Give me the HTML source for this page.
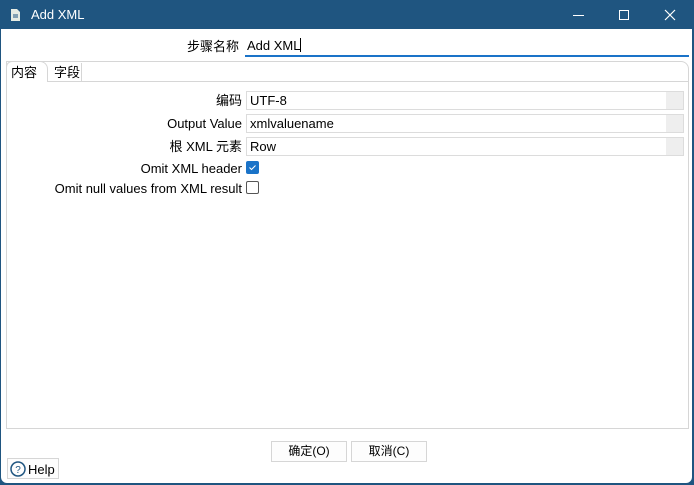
<!DOCTYPE html>
<html><head><meta charset="utf-8"><style>
*{box-sizing:border-box;margin:0;padding:0}
body{width:694px;height:485px;overflow:hidden;background:#1f5580;font-family:"Liberation Sans","Noto Sans CJK SC",sans-serif;font-size:13px;line-height:17px;color:#000;position:relative}
.win{position:absolute;left:1px;top:29px;width:691px;height:454px;background:#fff;border-radius:0 0 6px 6px}
.title{position:absolute;left:31px;top:6px;color:#fff;font-size:13px}
.a{position:absolute}
.lbl{position:absolute;text-align:right;white-space:nowrap;height:17px;line-height:17px}
.inp{position:absolute;left:245px;width:438px;height:19px;border:1px solid #dcdcdc;background:#fff;padding:0 3px;line-height:17px}
.inp i{position:absolute;right:0;top:0;width:17px;height:17px;background:#eeeeee}
.btn{position:absolute;height:21px;border:1px solid #d6d6d6;background:#fdfdfd;text-align:center;line-height:19px;font-size:12px}
</style></head><body>
<svg class="a" style="left:11px;top:9px" width="9" height="12"><path d="M0 0h6l3 3v9H0z" fill="#e6ece3"/><path d="M2 6h5M2 8h5" stroke="#1f5580"/></svg>
<div class="title">Add XML</div>
<div class="a" style="left:573px;top:15px;width:11px;height:1px;background:#fff"></div>
<div class="a" style="left:619px;top:10px;width:10px;height:10px;border:1px solid #fff"></div>
<svg class="a" style="left:664px;top:9px" width="12" height="12"><path d="M1 1L11 11M11 1L1 11" stroke="#fff" stroke-width="1.2"/></svg>
<div class="win">
 <div class="lbl" style="right:453px;top:9px">步骤名称</div>
 <div class="a" style="left:244px;top:8px;width:444px;height:20px;border-bottom:2px solid #1a73c8;padding-left:2px;line-height:17px">Add XML<span style="display:inline-block;width:1px;height:14px;background:#000;vertical-align:-2px"></span></div>
 <div class="a" style="left:5px;top:32px;width:683px;height:368px;border:1px solid #d6d6d6;border-radius:0 8px 0 0"></div>
 <div class="a" style="left:5px;top:32px;width:42px;height:21px;border:1px solid #d6d6d6;border-bottom:none;border-radius:6px 8px 0 0;background:#fff;padding:2px 0 0 4px">内容</div>
 <div class="a" style="left:47px;top:34px;width:34px;height:19px;border-right:1px solid #d6d6d6;padding:1px 0 0 6px">字段</div>
 <div class="a" style="left:47px;top:52px;width:641px;height:1px;background:#d6d6d6"></div>
 <div class="lbl" style="right:450px;top:63px">编码</div>
 <div class="inp" style="top:62px">UTF-8<i></i></div>
 <div class="lbl" style="right:450px;top:86px">Output Value</div>
 <div class="inp" style="top:85px">xmlvaluename<i></i></div>
 <div class="lbl" style="right:450px;top:109px">根 XML 元素</div>
 <div class="inp" style="top:108px">Row<i></i></div>
 <div class="lbl" style="right:450px;top:131px">Omit XML header</div>
 <div class="a" style="left:245px;top:132px;width:13px;height:13px;background:#1a73c8;border-radius:2px"><svg width="13" height="13" style="display:block"><path d="M3.5 6.5l2 2 4-4" stroke="#fff" fill="none"/></svg></div>
 <div class="lbl" style="right:450px;top:151px">Omit null values from XML result</div>
 <div class="a" style="left:245px;top:152px;width:13px;height:13px;border:1px solid #555;border-radius:2px"></div>
 <div class="btn" style="left:270px;top:412px;width:76px">确定(O)</div>
 <div class="btn" style="left:350px;top:412px;width:76px">取消(C)</div>
 <div class="btn" style="left:6px;top:429px;width:52px;font-size:13px"><svg class="a" style="left:2px;top:2px" width="16" height="16"><circle cx="8" cy="8" r="7" fill="none" stroke="#1f5580" stroke-width="1.5"/><text x="8" y="12" font-size="10" text-anchor="middle" fill="#1f5580" font-family="Liberation Sans">?</text></svg><span class="a" style="left:20px;top:1px">Help</span></div>
</div>
</body></html>
